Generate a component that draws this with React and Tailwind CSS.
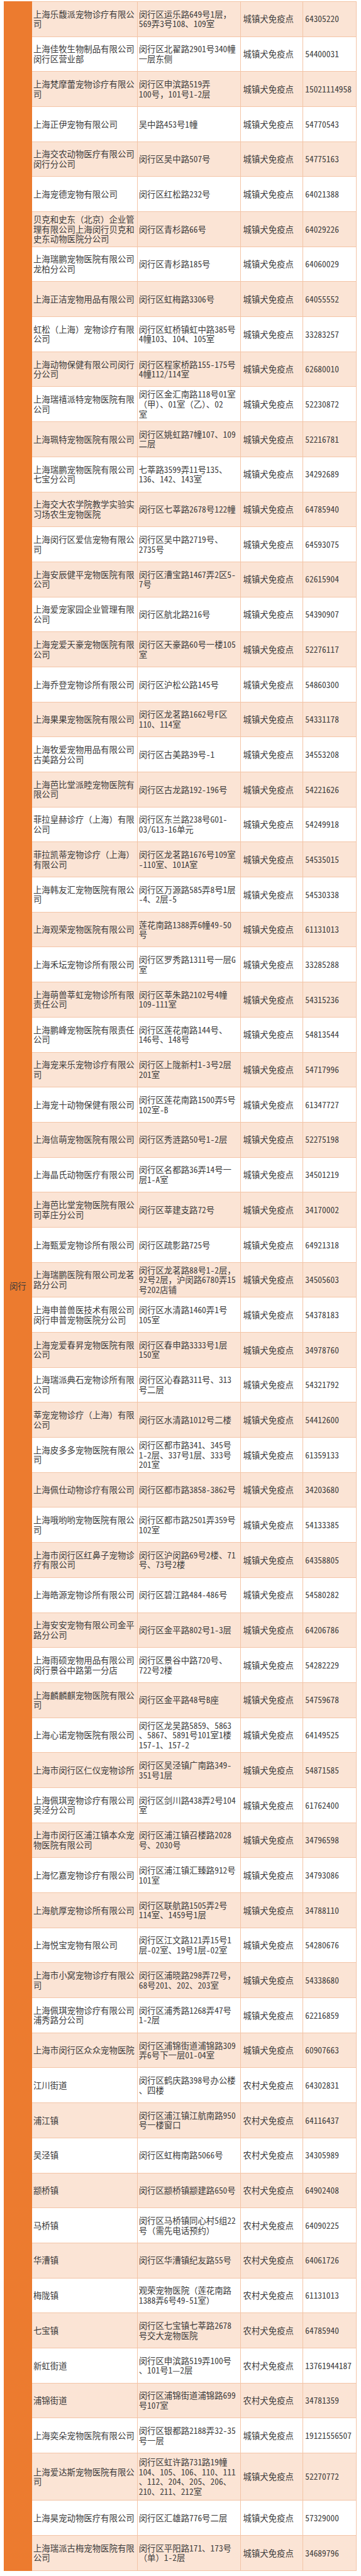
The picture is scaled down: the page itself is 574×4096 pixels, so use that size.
const URBAN = '城镇犬免疫点';
const RURAL = '农村犬免疫点';

// name | address | phone  ("|" marks the line breaks seen in the source table)
const ROWS = [
  ['上海乐馥派宠物诊疗有限公|司', '闵行区运乐路649号1层，|569弄3号108、109室', '64305220'],
  ['上海佳牧生物制品有限公司|闵行区营业部', '闵行区北翟路2901号340幢|一层东侧', '54400031'],
  ['上海梵摩蕾宠物诊疗有限公|司', '闵行区申滨路519弄|100号，101号1-2层', '15021114958'],
  ['上海正伊宠物有限公司', '吴中路453号1幢', '54770543'],
  ['上海交农动物医疗有限公司|闵行分公司', '闵行区吴中路507号', '54775163'],
  ['上海宠德宠物有限公司', '闵行区红松路232号', '64021388'],
  ['贝克和史东（北京）企业管|理有限公司上海闵行贝克和|史东动物医院分公司', '闵行区青杉路66号', '64029226'],
  ['上海瑞鹏宠物医院有限公司|龙柏分公司', '闵行区青杉路185号', '64060029'],
  ['上海正洁宠物用品有限公司', '闵行区虹梅路3306号', '64055552'],
  ['虹松（上海）宠物诊疗有限|公司', '闵行区虹桥镇虹中路385号|4幢103、104、105室', '33283257'],
  ['上海动物保健有限公司闵行|分公司', '闵行区程家桥路155-175号|4幢112/114室', '62680010'],
  ['上海瑞禧派特宠物医院有限|公司', '闵行区金汇南路118号01室|（甲）、01室（乙）、02|室', '52230872'],
  ['上海珮特宠物医院有限公司', '闵行区姚虹路7幢107、109|二层', '52216781'],
  ['上海瑞鹏宠物医院有限公司|七宝分公司', '七莘路3599弄11号135、|136、142、143室', '34292689'],
  ['上海交大农学院教学实验实|习场农生宠物医院', '闵行区七莘路2678号122幢', '64785940'],
  ['上海闵行区爱信宠物有限公|司', '闵行区吴中路2719号、|2735号', '64593075'],
  ['上海安辰健平宠物医院有限|公司', '闵行区漕宝路1467弄2区5-|7号', '62615904'],
  ['上海爱宠家园企业管理有限|公司', '闵行区航北路216号', '54390907'],
  ['上海宠爱天豪宠物医院有限|公司', '闵行区天豪路60号一楼105|室', '52276117'],
  ['上海乔登宠物诊所有限公司', '闵行区沪松公路145号', '54860300'],
  ['上海果果宠物医院有限公司', '闵行区龙茗路1662号F区|110、114室', '54331178'],
  ['上海牧爱宠物用品有限公司|古美路分公司', '闵行区古美路39号-1', '34553208'],
  ['上海芭比堂派睦宠物医院有|限公司', '闵行区古龙路192-196号', '54221626'],
  ['菲拉皇赫诊疗（上海）有限|公司', '闵行区东兰路238号G01-|03/G13-16单元', '54249918'],
  ['菲拉凯蒂宠物诊疗（上海）|有限公司', '闵行区龙茗路1676号109室|-110室、101A室', '54535015'],
  ['上海韩友汇宠物医院有限公|司', '闵行区万源路585弄8号1层|-4、2层-5', '54530338'],
  ['上海观荣宠物医院有限公司', '莲花南路1388弄6幢49-50|号', '61131013'],
  ['上海禾坛宠物诊所有限公司', '闵行区罗秀路1311号一层G|室', '33285288'],
  ['上海萌兽莘虹宠物诊所有限|责任公司', '闵行区莘朱路2102号4幢|109-111室', '54315236'],
  ['上海鹏峰宠物医院有限责任|公司', '闵行区莲花南路144号、|146号、148号', '54813544'],
  ['上海宠来乐宠物诊疗有限公|司', '闵行区上陇新村1-3号2层|201室', '54717996'],
  ['上海宠十动物保健有限公司', '闵行区莲花南路1500弄5号|102室-B', '61347727'],
  ['上海信萌宠物医院有限公司', '闵行区秀涟路50号1-2层', '52275198'],
  ['上海晶氏动物医疗有限公司', '闵行区名都路36弄14号一|层1-A室', '34501219'],
  ['上海芭比堂宠物医院有限公|司莘庄分公司', '闵行区莘建支路72号', '34170002'],
  ['上海甄爱宠物诊所有限公司', '闵行区疏影路725号', '64921318'],
  ['上海瑞鹏医院有限公司龙茗|路分公司', '闵行区龙茗路88号1-2层，|92号2层，沪闵路6780弄15|号202店铺', '34505603'],
  ['上海申普兽医技术有限公司|闵行申普宠物医院分公司', '闵行区水清路1460弄1号|105室', '54378183'],
  ['上海宠爱春昇宠物医院有限|公司', '闵行区春申路3333号1层|150室', '34978760'],
  ['上海瑞派典石宠物诊所有限|公司', '闵行区沁春路311号、313|号二层', '54321792'],
  ['莘宠宠物诊疗（上海）有限|公司', '闵行区水清路1012号二楼', '54412600'],
  ['上海皮多多宠物医院有限公|司', '闵行区都市路341、345号|1-2层、337号1层、333号|201室', '61359133'],
  ['上海佩仕动物诊疗有限公司', '闵行区都市路3858-3862号', '34203680'],
  ['上海哦哟哟宠物医院有限公|司', '闵行区都市路2501弄359号|102室', '54133385'],
  ['上海市闵行区红鼻子宠物诊|疗有限公司', '闵行区沪闵路69号2楼、71|号、73号2楼', '64358805'],
  ['上海皓源宠物诊所有限公司', '闵行区碧江路484-486号', '54580282'],
  ['上海安安宠物有限公司金平|路分公司', '闵行区金平路802号1-3层', '64206786'],
  ['上海雨硕宠物用品有限公司|闵行景谷中路第一分店', '闵行区景谷中路720号、|722号2楼', '54282229'],
  ['上海麟麟麒宠物医院有限公|司', '闵行区金平路48号B座', '54759678'],
  ['上海心诺宠物医院有限公司', '闵行区龙吴路5859、5863|、5867、5891号101室1楼|157-1、157-2', '64149525'],
  ['上海市闵行区仁仪宠物诊所', '闵行区吴泾镇广南路349-|351号1层', '54871585'],
  ['上海佩琪宠物诊疗有限公司|吴泾分公司', '闵行区剑川路438弄2号104|室', '61762400'],
  ['上海市闵行区浦江镇本众宠|物医院有限公司', '闵行区浦江镇召楼路2028|号、2030号', '34796598'],
  ['上海忆嘉宠物诊疗有限公司', '闵行区浦江镇汇臻路912号|101室', '34793086'],
  ['上海航厚宠物诊所有限公司', '闵行区联航路1505弄2号|114室、1459号1层', '34788110'],
  ['上海悦宝宠物有限公司', '闵行区江文路121弄15号1|层-02室、19号1层-02室', '54280676'],
  ['上海市小窝宠物诊疗有限公|司', '闵行区浦晓路298弄72号，|68号201、202、203室', '54338680'],
  ['上海佩琪宠物诊疗有限公司|浦秀路分公司', '闵行区浦秀路1268弄47号|1-2层', '62216859'],
  ['上海市闵行区众众宠物医院', '闵行区浦锦街道浦锦路309|弄6号下一层01-04室', '60907663'],
  ['江川街道', '闵行区鹤庆路398号办公楼|、四楼', '64302831', RURAL],
  ['浦江镇', '闵行区浦江镇江航南路950|号一楼窗口', '64116437', RURAL],
  ['吴泾镇', '闵行区虹梅南路5066号', '34305989', RURAL],
  ['颛桥镇', '闵行区颛桥镇颛建路650号', '64902408', RURAL],
  ['马桥镇', '闵行区马桥镇同心村5组22|号（需先电话预约）', '64090225', RURAL],
  ['华漕镇', '闵行区华漕镇纪友路55号', '64061726', RURAL],
  ['梅陇镇', '观荣宠物医院（莲花南路|1388弄6号49-51室）', '61131013', RURAL],
  ['七宝镇', '闵行区七宝镇七莘路2678|号交大宠物医院', '64785940', RURAL],
  ['新虹街道', '闵行区申滨路519弄100号|、101号1—2层', '13761944187', RURAL],
  ['浦锦街道', '闵行区浦锦街道浦锦路699|号107室', '34781359', RURAL],
  ['上海奕朵宠物医院有限公司', '闵行区银都路2188弄32-35|号一层', '19121556507'],
  ['上海爱达斯宠物医院有限公|司', '闵行区虹许路731路19幢|104、105、106、110、111|、112、204、205、206、|210、211、212室', '52270772'],
  ['上海昊宠动物医疗有限公司', '闵行区汇雄路776号二层', '57329000'],
  ['上海瑞派古梅宠物医院有限|公司', '闵行区平阳路171、173号|（单）1-2层', '34689796'],
];

function Lines({ text }) {
  return text.split('|').map((line, i) => (
    <span key={i} className="block whitespace-nowrap">{line}</span>
  ));
}

function Row({ row, index }) {
  const [name, address, phone, type = URBAN] = row;
  const tall = address.split('|').length > 3;
  return (
    <div
      className={`flex border-b border-[#F3C4A6] ${index % 2 === 0 ? 'bg-[#FBE4D5]' : 'bg-white'} ${tall ? 'h-[75.4px]' : 'h-[55.7px]'}`}
    >
      <div className="w-[168.1px] shrink-0 flex flex-col justify-center pl-[2.4px] border-r border-[#F3C4A6]">
        <Lines text={name} />
      </div>
      <div className="w-[164.3px] shrink-0 flex flex-col justify-center pl-[2px] border-r border-[#F3C4A6]">
        <Lines text={address} />
      </div>
      <div className="w-[99.3px] shrink-0 flex items-center pl-[3.6px] border-r border-[#F3C4A6] whitespace-nowrap">
        {type}
      </div>
      <div className="w-[85px] shrink-0 flex items-center pl-[3px] border-r border-[#F3C4A6] whitespace-nowrap">
        {phone}
      </div>
    </div>
  );
}

export default function App() {
  return (
    <div className="bg-white w-[574px] min-h-[4096px] pt-[1.9px] pl-[6px] font-['Noto_Sans_Mono_CJK_SC','Noto_Sans_CJK_SC',sans-serif] text-[13.4px] leading-[15.6px] text-[#3b3b3b]">
      <div className="flex w-[561.3px]">
        {/* district column, one merged cell */}
        <div className="w-[44.6px] shrink-0 bg-[#EC7B2F] flex items-center justify-center">
          闵行
        </div>
        <div className="flex-1 border-t border-[#F3C4A6]">
          {ROWS.map((row, i) => (
            <Row key={i} row={row} index={i} />
          ))}
        </div>
      </div>
    </div>
  );
}
